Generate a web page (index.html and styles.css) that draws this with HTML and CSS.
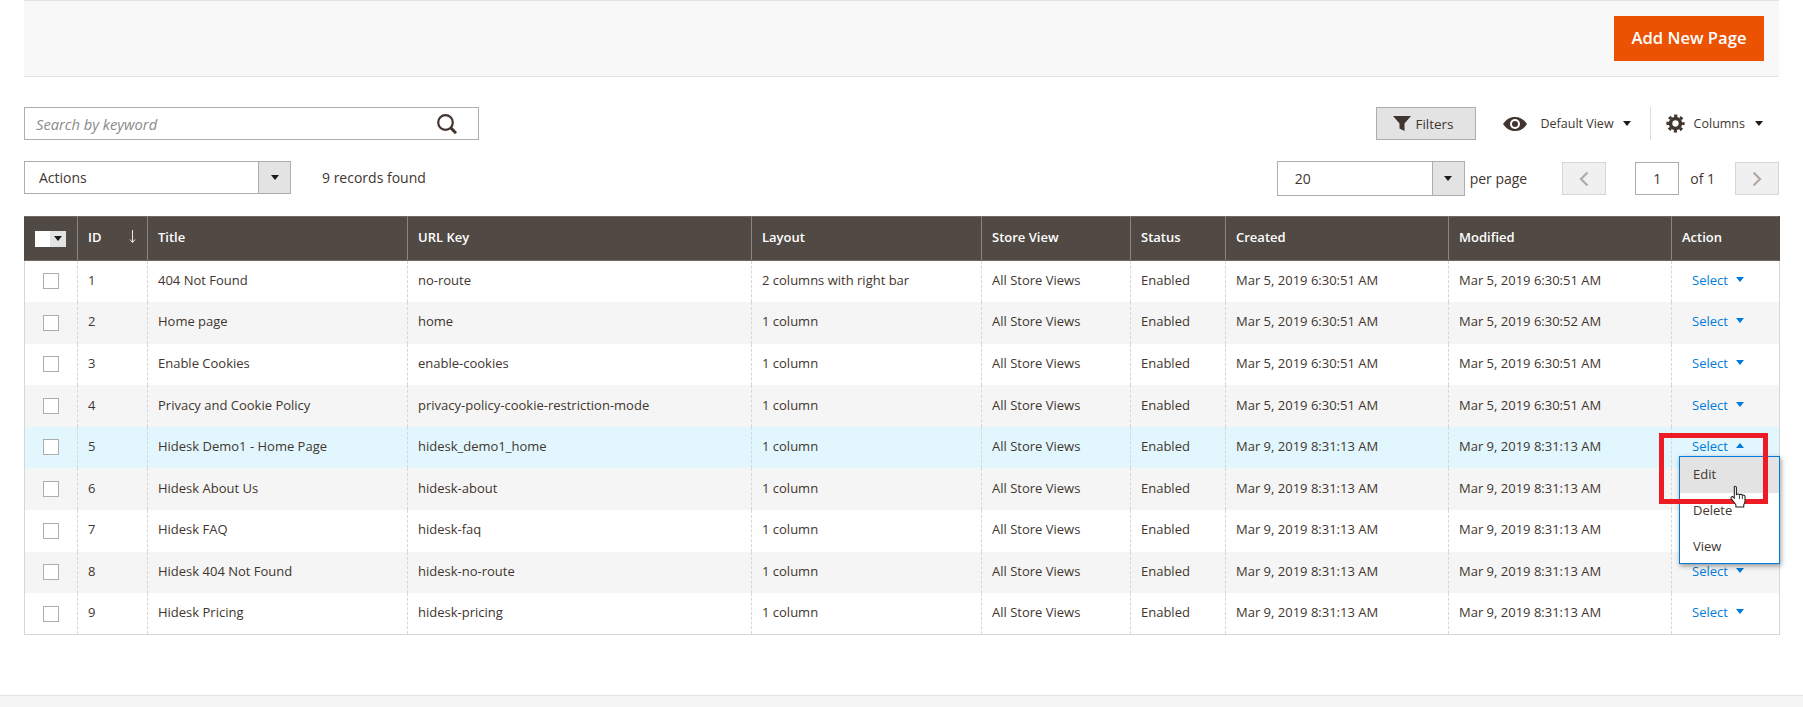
FILE: index.html
```html
<!DOCTYPE html>
<html lang="en">
<head>
    <meta charset="UTF-8">
    <title>Pages</title>
    <link rel="stylesheet" href="styles.css">
</head>
<body>

<div class="page">
    <div class="page-actions">
        <button class="btn-primary">Add New Page</button>
    </div>

    <div class="toolbar">
        <div class="search">
            <span class="search-text">Search by keyword</span>
            <svg class="search-icon" width="22" height="22" viewBox="0 0 22 22"><circle cx="9.5" cy="9.5" r="7.3" fill="none" stroke="#41362f" stroke-width="2.2"/><path d="M14.6 14.6l5.4 5.6" stroke="#41362f" stroke-width="3" fill="none"/></svg>
        </div>
        <div class="toolbar-right">
            <button class="btn-filters">
                <svg width="18" height="15" viewBox="0 0 18 15"><path d="M0 0h18l-6.500 7.500V15l-5-2.500V7.500z" fill="#41362f"/></svg>
                Filters
            </button>
            <div class="view-menu">
                <svg width="24" height="14" viewBox="0 0 24 14"><path d="M0 7C3 2.500 7 0 12 0s9 2.500 12 7c-3 4.500-7 7-12 7S3 11.500 0 7z" fill="#41362f"/><circle cx="12" cy="7" r="5" fill="#fff"/><circle cx="12" cy="7" r="3" fill="#41362f"/></svg>
                <span class="view-label">Default View</span>
                <span class="caret"></span>
            </div>
            <div class="columns-menu">
                <svg width="19" height="19" viewBox="0 0 24 24"><circle cx="12" cy="12" r="6.250" fill="none" stroke="#41362f" stroke-width="4.500"/><circle cx="12" cy="12" r="9.750" fill="none" stroke="#41362f" stroke-width="3.500" stroke-dasharray="4 3.660" stroke-dashoffset="2"/></svg>
                <span class="view-label">Columns</span>
                <span class="caret"></span>
            </div>
        </div>
    </div>

    <div class="pager-row">
        <div class="select actions-select">
            <span class="select-value">Actions</span>
            <span class="select-btn"><span class="caret"></span></span>
        </div>
        <span class="records">9 records found</span>
        <div class="pager">
            <div class="select perpage-select">
                <span class="select-value">20</span>
                <span class="select-btn"><span class="caret"></span></span>
            </div>
            <span class="per-page">per page</span>
            <span class="page-btn prev"><svg width="10" height="16" viewBox="0 0 10 16"><path d="M8.500 1.500L2 8l6.500 6.500" fill="none" stroke="#b0a9a4" stroke-width="2.200"/></svg></span>
            <span class="page-input">1</span>
            <span class="of-pages">of 1</span>
            <span class="page-btn next"><svg width="10" height="16" viewBox="0 0 10 16"><path d="M1.500 1.500L8 8l-6.500 6.500" fill="none" stroke="#b0a9a4" stroke-width="2.200"/></svg></span>
        </div>
    </div>

    <table class="grid">
        <colgroup>
            <col class="c-check"><col class="c-id"><col class="c-title"><col class="c-url"><col class="c-layout">
            <col class="c-store"><col class="c-status"><col class="c-date"><col class="c-date"><col class="c-action">
        </colgroup>
        <thead>
            <tr>
                <th class="head-check"><span class="multi"><span class="multi-box"></span><span class="multi-btn"><span class="caret"></span></span></span></th>
                <th class="head-id">ID <svg class="sort-arrow" width="7" height="13" viewBox="0 0 7 13"><path d="M3.500 0v12M1 9.500l2.500 3 2.500-3" fill="none" stroke="#f3e9d8" stroke-width="1"/></svg></th>
                <th>Title</th>
                <th>URL Key</th>
                <th>Layout</th>
                <th>Store View</th>
                <th>Status</th>
                <th>Created</th>
                <th>Modified</th>
                <th>Action</th>
            </tr>
        </thead>
        <tbody>
            <tr>
                <td><span class="check"></span></td><td>1</td><td>404 Not Found</td><td>no-route</td><td>2 columns with right bar</td>
                <td>All Store Views</td><td>Enabled</td><td>Mar 5, 2019 6:30:51 AM</td><td>Mar 5, 2019 6:30:51 AM</td>
                <td class="action-cell"><a class="select-link">Select<span class="tri"></span></a></td>
            </tr>
            <tr>
                <td><span class="check"></span></td><td>2</td><td>Home page</td><td>home</td><td>1 column</td>
                <td>All Store Views</td><td>Enabled</td><td>Mar 5, 2019 6:30:51 AM</td><td>Mar 5, 2019 6:30:52 AM</td>
                <td class="action-cell"><a class="select-link">Select<span class="tri"></span></a></td>
            </tr>
            <tr>
                <td><span class="check"></span></td><td>3</td><td>Enable Cookies</td><td>enable-cookies</td><td>1 column</td>
                <td>All Store Views</td><td>Enabled</td><td>Mar 5, 2019 6:30:51 AM</td><td>Mar 5, 2019 6:30:51 AM</td>
                <td class="action-cell"><a class="select-link">Select<span class="tri"></span></a></td>
            </tr>
            <tr>
                <td><span class="check"></span></td><td>4</td><td>Privacy and Cookie Policy</td><td>privacy-policy-cookie-restriction-mode</td><td>1 column</td>
                <td>All Store Views</td><td>Enabled</td><td>Mar 5, 2019 6:30:51 AM</td><td>Mar 5, 2019 6:30:51 AM</td>
                <td class="action-cell"><a class="select-link">Select<span class="tri"></span></a></td>
            </tr>
            <tr class="active">
                <td><span class="check"></span></td><td>5</td><td>Hidesk Demo1 - Home Page</td><td>hidesk_demo1_home</td><td>1 column</td>
                <td>All Store Views</td><td>Enabled</td><td>Mar 9, 2019 8:31:13 AM</td><td>Mar 9, 2019 8:31:13 AM</td>
                <td class="action-cell">
                    <a class="select-link">Select<span class="tri up"></span></a>
                    <ul class="action-menu">
                        <li class="hover">Edit</li>
                        <li>Delete</li>
                        <li>View</li>
                    </ul>
                    <span class="callout"></span>
                    <svg class="hand" width="17" height="23" viewBox="0 0 16 22"><path d="M4 1.500c1-.8 2 0 2 1v7c.5-1 2.500-1.200 3 0 .6-.8 2.300-.8 2.700.4.700-.5 2.300-.3 2.500 1v4.600c0 1.500-.8 2.500-1.200 3.500v2H5.500v-2C4.500 17 2 14.500 1 13c-.8-1.300.8-2.500 2-1.500l1 1z" fill="#fff" stroke="#222" stroke-width="1"/><path d="M9 10v3.500M11.700 10.500v3" stroke="#222" stroke-width=".8"/></svg>
                </td>
            </tr>
            <tr>
                <td><span class="check"></span></td><td>6</td><td>Hidesk About Us</td><td>hidesk-about</td><td>1 column</td>
                <td>All Store Views</td><td>Enabled</td><td>Mar 9, 2019 8:31:13 AM</td><td>Mar 9, 2019 8:31:13 AM</td>
                <td class="action-cell"><a class="select-link">Select<span class="tri"></span></a></td>
            </tr>
            <tr>
                <td><span class="check"></span></td><td>7</td><td>Hidesk FAQ</td><td>hidesk-faq</td><td>1 column</td>
                <td>All Store Views</td><td>Enabled</td><td>Mar 9, 2019 8:31:13 AM</td><td>Mar 9, 2019 8:31:13 AM</td>
                <td class="action-cell"><a class="select-link">Select<span class="tri"></span></a></td>
            </tr>
            <tr>
                <td><span class="check"></span></td><td>8</td><td>Hidesk 404 Not Found</td><td>hidesk-no-route</td><td>1 column</td>
                <td>All Store Views</td><td>Enabled</td><td>Mar 9, 2019 8:31:13 AM</td><td>Mar 9, 2019 8:31:13 AM</td>
                <td class="action-cell"><a class="select-link">Select<span class="tri"></span></a></td>
            </tr>
            <tr>
                <td><span class="check"></span></td><td>9</td><td>Hidesk Pricing</td><td>hidesk-pricing</td><td>1 column</td>
                <td>All Store Views</td><td>Enabled</td><td>Mar 9, 2019 8:31:13 AM</td><td>Mar 9, 2019 8:31:13 AM</td>
                <td class="action-cell"><a class="select-link">Select<span class="tri"></span></a></td>
            </tr>
        </tbody>
    </table>
</div>

<div class="footer"></div>

</body>
</html>
```

FILE: styles.css
```css
html, body { margin: 0; padding: 0; background: #fff; }
body { font-family: "Open Sans", sans-serif; font-size: 13px; color: #41362f; height: 707px; overflow: hidden; position: relative; }
.page { padding: 0 24px; }

.page-actions {
    height: 77px;
    box-sizing: border-box;
    background: #f8f8f8;
    border-top: 1px solid #e3e3e3;
    border-bottom: 1px solid #e3e3e3;
    display: flex;
    justify-content: flex-end;
    align-items: flex-start;
    padding: 15px 15px 0 0;
}
.btn-primary {
    width: 150px;
    height: 45px;
    background: #eb5202;
    color: #fff;
    border: none;
    font-family: inherit;
    font-size: 16.6px;
    font-weight: 600;
    padding: 0 0 2px;
}

.toolbar { display: flex; justify-content: space-between; margin-top: 30px; height: 33px; }
.search {
    width: 455px;
    box-sizing: border-box;
    border: 1px solid #adadad;
    display: flex;
    align-items: center;
    justify-content: space-between;
    padding: 0 20px 0 11px;
}
.search-text { font-style: italic; color: #8a8a8a; font-size: 14.7px; }
.toolbar-right { display: flex; align-items: center; }
.btn-filters {
    width: 100px;
    height: 33px;
    box-sizing: border-box;
    background: #e3e3e3;
    border: 1px solid #adadad;
    font-family: inherit;
    font-size: 13.5px;
    font-weight: 400;
    color: #41362f;
    display: flex;
    align-items: center;
    justify-content: center;
    gap: 4px;
    padding: 0 4px 0 0;
}
.view-menu { display: flex; align-items: center; margin-left: 27px; padding-right: 19px; height: 33px; border-right: 1px solid #dcdcdc; }
.view-label { font-size: 12.5px; margin-left: 14px; }
.view-menu .caret { margin-left: 9px; }
.columns-menu { display: flex; align-items: center; margin-left: 15px; margin-right: 16px; }
.columns-menu .view-label { margin-left: 9px; }
.columns-menu .caret { margin-left: 10px; }
.caret { display: inline-block; width: 0; height: 0; border-left: 4px solid transparent; border-right: 4px solid transparent; border-top: 5px solid #1f1a17; }

.pager-row { display: flex; align-items: flex-start; margin-top: 21px; height: 55px; font-size: 14px; }
.select {
    display: flex;
    box-sizing: border-box;
    border: 1px solid #adadad;
    height: 33px;
    background: #fff;
}
.actions-select { width: 267px; }
.select-value { flex: 1; padding-left: 14px; line-height: 31px; }
.select-btn {
    width: 31px;
    background: #e3e3e3;
    border-left: 1px solid #adadad;
    display: flex;
    align-items: center;
    justify-content: center;
}
.records { margin-left: 31px; line-height: 33px; }
.pager { margin-left: auto; display: flex; align-items: center; height: 35px; }
.perpage-select { width: 188px; height: 35px; }
.perpage-select .select-value { padding-left: 17px; line-height: 33px; }
.per-page { margin-left: 5px; }
.page-btn {
    width: 44px;
    height: 33px;
    box-sizing: border-box;
    background: #f0f0f0;
    border: 1px solid #d6d6d6;
    display: flex;
    align-items: center;
    justify-content: center;
}
.prev { margin-left: 35px; }
.page-input {
    width: 44px;
    height: 33px;
    box-sizing: border-box;
    border: 1px solid #adadad;
    margin-left: 29px;
    text-align: center;
    line-height: 31px;
}
.of-pages { margin-left: 11px; margin-right: 20px; }

.grid { border-collapse: collapse; table-layout: fixed; width: 1755px; }
.c-check { width: 53px; }
.c-id { width: 70px; }
.c-title { width: 260px; }
.c-url { width: 344px; }
.c-layout { width: 230px; }
.c-store { width: 149px; }
.c-status { width: 95px; }
.c-date { width: 223px; }
.c-action { width: 108px; }
.grid th {
    background: #514943;
    color: #fff;
    font-size: 13px;
    font-weight: 600;
    text-align: left;
    height: 44px;
    box-sizing: border-box;
    padding: 0 10px 4px;
    border: 1px solid #8a837f;
    border-top-color: #716965;
    border-bottom-color: #716965;
}
.grid th:first-child { border-left-color: #514943; }
.grid th:last-child { border-right-color: #514943; }
.head-check { padding-bottom: 0 !important; }
.head-id { position: relative; }
.sort-arrow { position: absolute; right: 11px; top: 13px; }
.multi { display: flex; width: 31px; height: 16px; }
.multi-box { width: 15px; background: #fff; }
.multi-btn { flex: 1; background: #e3e3e3; display: flex; align-items: center; justify-content: center; }

.grid td {
    height: 41.6px;
    box-sizing: border-box;
    padding: 0 10px 3px;
    border-left: 1px dashed #d6d6d6;
    border-right: 1px dashed #d6d6d6;
}
.grid td:first-child { border-left: 1px solid #d6d6d6; text-align: center; }
.grid td:last-child { border-right: 1px solid #d6d6d6; }
.grid tbody tr:nth-child(even) td { background: #f5f5f5; }
.grid tbody tr.active td { background: #e2f6fe; }
.grid tbody tr:last-child td { border-bottom: 1px solid #d6d6d6; }
.check { display: inline-block; width: 16px; height: 16px; box-sizing: border-box; border: 1px solid #adadad; background: #fff; vertical-align: middle; }

.select-link { color: #007bdb; margin-left: 10px; }
.tri { display: inline-block; width: 0; height: 0; margin-left: 8px; vertical-align: 3px; border-left: 4.500px solid transparent; border-right: 4.500px solid transparent; border-top: 5px solid #007bdb; }
.tri.up { border-top: none; border-bottom: 5px solid #007bdb; }

.action-cell { position: relative; }
.action-menu {
    position: absolute;
    top: 29px;
    right: -1px;
    width: 101px;
    height: 108px;
    box-sizing: border-box;
    margin: 0;
    padding: 0;
    list-style: none;
    background: #fff;
    border: 1px solid #007bdb;
    box-shadow: 1px 2px 5px rgba(0, 0, 0, .4);
    z-index: 2;
}
.action-menu li { height: 36px; line-height: 35px; padding-left: 13px; }
.action-menu li.hover { background: #e3e3e3; }
.callout {
    position: absolute;
    left: -13px;
    top: 6px;
    width: 109px;
    height: 71px;
    box-sizing: border-box;
    border: 5px solid #ed1c24;
    z-index: 3;
}
.hand { position: absolute; left: 58px; top: 58px; z-index: 4; }

.footer { position: absolute; left: 0; right: 0; top: 695px; bottom: 0; background: #f5f5f5; border-top: 1px solid #e3e3e3; }
```
